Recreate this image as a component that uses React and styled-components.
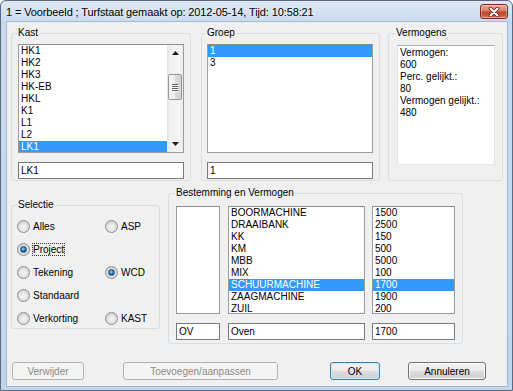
import React from 'react';
import styled, { createGlobalStyle, css } from 'styled-components';

const Global = createGlobalStyle`
  html, body { margin: 0; padding: 0; background: #ffffff; }
  body { font-family: "Liberation Sans", Arial, sans-serif; }
  *, *::before, *::after { box-sizing: border-box; }
`;

const Window = styled.div`
  width: 513px;
  height: 391px;
  border: 1px solid #566a82;
  border-radius: 6px 6px 0 0;
  background: linear-gradient(180deg, #dce8f5 0px, #c9daee 21px, #c2d5eb 100%);
  padding: 0 5px 4px 6px;
  display: flex;
  flex-direction: column;
  font-family: "Liberation Sans", Arial, sans-serif;
  font-size: 10px;
  color: #000;
`;

const TitleBar = styled.div`
  height: 21px;
  margin: 0 -5px 0 -6px;
  padding: 0 4px 0 5px;
  display: flex;
  align-items: center;
  justify-content: space-between;
`;

const TitleText = styled.span`
  font-size: 11px;
  letter-spacing: -0.12px;
  white-space: nowrap;
  color: #000;
  text-shadow: 0 0 5px rgba(255, 255, 255, 0.9);
`;

const CloseButton = styled.div`
  width: 28px;
  height: 15px;
  align-self: flex-start;
  margin-top: 3px;
  border: 1px solid #7a2c20;
  border-radius: 3px;
  background: linear-gradient(180deg, #e9ab9b 0%, #d98069 45%, #c2462f 52%, #c9533b 80%, #dc8a73 100%);
  box-shadow: inset 0 0 0 1px rgba(255, 255, 255, 0.3);
  display: flex;
  align-items: center;
  justify-content: center;
`;

const Client = styled.div`
  flex: 1;
  background: #f0f0f0;
  box-shadow: 0 0 0 1px #a3b9d3;
  padding: 5px 4px 6px 4px;
  display: flex;
  flex-direction: column;
`;

const Row = styled.div`
  display: flex;
  align-items: flex-start;
  margin-top: ${(p) => p.$mt || 0}px;
`;

const GroupBox = styled.fieldset`
  margin: ${(p) => p.$mt || 0}px ${(p) => p.$mr || 0}px 0 0;
  min-width: 0;
  width: ${(p) => p.$w}px;
  height: ${(p) => p.$h}px;
  border: 1px solid #d5dfe5;
  border-radius: 3px;
  padding: ${(p) => p.$pt}px 0 0 ${(p) => p.$pl}px;
  display: flex;
  flex-direction: column;
  align-items: flex-start;
`;

const Legend = styled.legend`
  padding: 0 1px;
  margin-left: ${(p) => p.$ml}px;
  font-size: 10px;
  line-height: 12px;
  color: #000;
`;

const ListBox = styled.div`
  width: ${(p) => p.$w}px;
  height: ${(p) => p.$h}px;
  border: 1px solid #9c9c9c;
  border-top-color: #8e8e8e;
  background: #fff;
  display: flex;
  overflow: hidden;
  flex-shrink: 0;
`;

const Items = styled.div`
  flex: 1;
  min-width: 0;
  display: flex;
  flex-direction: column;
`;

const Item = styled.div`
  height: 12px;
  line-height: 12px;
  padding-left: 2px;
  white-space: nowrap;
  flex-shrink: 0;
  ${(p) =>
    p.$selected &&
    css`
      background: #3399ff;
      color: #fff;
    `}
`;

const TextBox = styled.div`
  width: ${(p) => p.$w}px;
  height: 17px;
  margin-top: 9px;
  border: 1px solid #7a7a7a;
  background: #fff;
  padding-left: 2px;
  line-height: 15px;
  white-space: nowrap;
  flex-shrink: 0;
`;

const InfoBox = styled.div`
  width: 98px;
  height: 120px;
  border: 1px solid #e2e3ea;
  border-top-color: #a9abb2;
  border-bottom-color: #e3e9ef;
  background: #fff;
  padding: 1px 2px;
  line-height: 12px;
`;

const ScrollBar = styled.div`
  width: 16px;
  display: flex;
  flex-direction: column;
  background: linear-gradient(90deg, #e3e3e3 0%, #f1f1f1 20%, #f4f4f4 80%, #e9e9e9 100%);
`;

const ArrowButton = styled.div`
  height: 16px;
  display: flex;
  align-items: center;
  justify-content: center;
  flex-shrink: 0;
`;

const Track = styled.div`
  flex: 1;
  display: flex;
  flex-direction: column;
`;

const Thumb = styled.div`
  margin: 13px 1px 0 1px;
  height: 26px;
  border: 1px solid #979797;
  border-radius: 2px;
  background: linear-gradient(90deg, #f7f7f7 0%, #ececec 50%, #dcdcdc 51%, #d3d3d3 100%);
  display: flex;
  flex-direction: column;
  align-items: center;
  justify-content: center;
  gap: 1px;
`;

const GripLine = styled.div`
  width: 6px;
  height: 1px;
  background: #5f5f5f;
  box-shadow: 0 1px 0 #ffffff;
`;

const RadioGrid = styled.div`
  display: grid;
  grid-template-columns: 88px 1fr;
  grid-auto-rows: 23px;
  align-items: center;
  width: 100%;
`;

const RadioItem = styled.div`
  display: flex;
  align-items: center;
  grid-column: ${(p) => p.$col};
`;

const RadioCircle = styled.span`
  width: 13px;
  height: 13px;
  border-radius: 50%;
  border: 1px solid #8d8d8d;
  background: radial-gradient(circle at 50% 55%, #f6f6f6 0%, #e9e9e9 35%, #cfcfcf 80%, #c4c4c4 100%);
  display: flex;
  align-items: center;
  justify-content: center;
  flex-shrink: 0;
`;

const RadioDot = styled.span`
  width: 7px;
  height: 7px;
  border-radius: 50%;
  background: radial-gradient(circle at 45% 40%, #a8ddfb 0%, #4a9ad8 30%, #175a98 65%, #0d3f70 100%);
  border: 1px solid #244f79;
`;

const RadioLabel = styled.span`
  margin-left: 2px;
  padding: 0;
  line-height: 11px;
  border: 1px ${(p) => (p.$focus ? 'dotted #333' : 'solid transparent')};
  white-space: nowrap;
`;

const ListRow = styled.div`
  display: flex;
`;

const Column = styled.div`
  display: flex;
  flex-direction: column;
  margin-right: ${(p) => p.$mr || 0}px;
`;

const ButtonRow = styled.div`
  display: flex;
  margin-top: 18px;
  height: 18px;
`;

const Button = styled.div`
  width: ${(p) => p.$w}px;
  height: 18px;
  margin-left: ${(p) => p.$ml}px;
  border-radius: 3px;
  display: flex;
  align-items: center;
  justify-content: center;
  font-size: 10px;
  white-space: nowrap;
  ${(p) =>
    p.$variant === 'disabled'
      ? css`
          border: 1px solid #adb2b5;
          background: #f4f4f4;
          color: #8a8a8a;
        `
      : p.$variant === 'default'
      ? css`
          border: 1px solid #3c7fb1;
          box-shadow: inset 0 0 0 1px #c8e8f9;
          background: linear-gradient(180deg, #f3f3f3 0%, #ebebeb 50%, #dddddd 51%, #cfcfcf 100%);
          color: #000;
        `
      : css`
          border: 1px solid #707070;
          background: linear-gradient(180deg, #f2f2f2 0%, #ebebeb 50%, #dddddd 51%, #cfcfcf 100%);
          box-shadow: inset 0 0 0 1px #fcfcfc;
          color: #000;
        `}
`;

const UpGlyph = () => (
  <svg width="7" height="4" viewBox="0 0 7 4">
    <polygon points="3.5,0 7,4 0,4" fill="#1e1e1e" />
  </svg>
);
const DownGlyph = () => (
  <svg width="7" height="4" viewBox="0 0 7 4">
    <polygon points="0,0 7,0 3.5,4" fill="#1e1e1e" />
  </svg>
);

const CloseGlyph = () => (
  <svg width="12" height="10" viewBox="0 0 12 10">
    <path d="M2.5 1.5 L9.5 8.5 M9.5 1.5 L2.5 8.5" stroke="#5b1d14" strokeWidth="3.6" strokeLinecap="round" />
    <path d="M2.5 1.5 L9.5 8.5 M9.5 1.5 L2.5 8.5" stroke="#ffffff" strokeWidth="2" strokeLinecap="round" />
  </svg>
);

const kast = ['HK1', 'HK2', 'HK3', 'HK-EB', 'HKL', 'K1', 'L1', 'L2', 'LK1'];
const groep = ['1', '3'];
const bestemming = ['BOORMACHINE', 'DRAAIBANK', 'KK', 'KM', 'MBB', 'MIX', 'SCHUURMACHINE', 'ZAAGMACHINE', 'ZUIL'];
const vermogen = ['1500', '2500', '150', '500', '5000', '100', '1700', '1900', '200'];
const info = ['Vermogen:', '600', 'Perc. gelijkt.:', '80', 'Vermogen gelijkt.:', '480'];

const radios = [
  { label: 'Alles', col: 1 },
  { label: 'ASP', col: 2 },
  { label: 'Project', col: 1, checked: true, focus: true },
  { label: null, col: 2 },
  { label: 'Tekening', col: 1 },
  { label: 'WCD', col: 2, checked: true },
  { label: 'Standaard', col: 1 },
  { label: null, col: 2 },
  { label: 'Verkorting', col: 1 },
  { label: 'KAST', col: 2 },
];

export default function App() {
  return (
    <>
      <Global />
      <Window>
        <TitleBar>
          <TitleText>1 = Voorbeeld ; Turfstaat gemaakt op: 2012-05-14, Tijd: 10:58:21</TitleText>
          <CloseButton>
            <CloseGlyph />
          </CloseButton>
        </TitleBar>
        <Client>
          <Row>
            <GroupBox $w={180} $h={154} $pt={5} $pl={6} $mr={10}>
              <Legend $ml={-1}>Kast</Legend>
              <ListBox $w={166} $h={109}>
                <Items>
                  {kast.map((k) => (
                    <Item key={k} $selected={k === 'LK1'}>
                      {k}
                    </Item>
                  ))}
                </Items>
                <ScrollBar>
                  <ArrowButton>
                    <UpGlyph />
                  </ArrowButton>
                  <Track>
                    <Thumb>
                      <GripLine />
                      <GripLine />
                      <GripLine />
                      <GripLine />
                    </Thumb>
                  </Track>
                  <ArrowButton>
                    <DownGlyph />
                  </ArrowButton>
                </ScrollBar>
              </ListBox>
              <TextBox $w={166}>LK1</TextBox>
            </GroupBox>
            <GroupBox $w={179} $h={154} $pt={5} $pl={5} $mr={8}>
              <Legend $ml={-1}>Groep</Legend>
              <ListBox $w={166} $h={109}>
                <Items>
                  {groep.map((g) => (
                    <Item key={g} $selected={g === '1'}>
                      {g}
                    </Item>
                  ))}
                </Items>
              </ListBox>
              <TextBox $w={166}>1</TextBox>
            </GroupBox>
            <GroupBox $w={115} $h={154} $pt={6} $pl={8}>
              <Legend $ml={-2}>Vermogens</Legend>
              <InfoBox>
                {info.map((l) => (
                  <div key={l}>{l}</div>
                ))}
              </InfoBox>
            </GroupBox>
          </Row>
          <Row $mt={6}>
            <GroupBox $w={149} $h={130} $pt={4} $pl={5} $mr={8} $mt={12}>
              <Legend $ml={0}>Selectie</Legend>
              <RadioGrid>
                {radios.map((r, i) =>
                  r.label ? (
                    <RadioItem key={i} $col={r.col}>
                      <RadioCircle>{r.checked && <RadioDot />}</RadioCircle>
                      <RadioLabel $focus={r.focus}>{r.label}</RadioLabel>
                    </RadioItem>
                  ) : (
                    <span key={i} />
                  )
                )}
              </RadioGrid>
            </GroupBox>
            <GroupBox $w={295} $h={157} $pt={7} $pl={7}>
              <Legend $ml={-1}>Bestemming en Vermogen</Legend>
              <ListRow>
                <Column $mr={8}>
                  <ListBox $w={44} $h={108} />
                  <TextBox $w={44}>OV</TextBox>
                </Column>
                <Column $mr={7}>
                  <ListBox $w={137} $h={108}>
                    <Items>
                      {bestemming.map((b) => (
                        <Item key={b} $selected={b === 'SCHUURMACHINE'}>
                          {b}
                        </Item>
                      ))}
                    </Items>
                  </ListBox>
                  <TextBox $w={137}>Oven</TextBox>
                </Column>
                <Column>
                  <ListBox $w={83} $h={108}>
                    <Items>
                      {vermogen.map((v, i) => (
                        <Item key={i} $selected={i === 6}>
                          {v}
                        </Item>
                      ))}
                    </Items>
                  </ListBox>
                  <TextBox $w={83}>1700</TextBox>
                </Column>
              </ListRow>
            </GroupBox>
          </Row>
          <ButtonRow>
            <Button $w={72} $ml={1} $variant="disabled">Verwijder</Button>
            <Button $w={155} $ml={39} $variant="disabled">Toevoegen/aanpassen</Button>
            <Button $w={50} $ml={52} $variant="default">OK</Button>
            <Button $w={78} $ml={28}>Annuleren</Button>
          </ButtonRow>
        </Client>
      </Window>
    </>
  );
}
